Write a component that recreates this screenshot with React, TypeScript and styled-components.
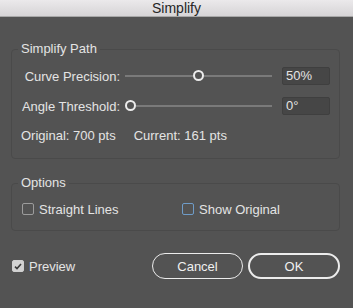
import React from "react";
import styled, { createGlobalStyle } from "styled-components";

const GlobalStyle = createGlobalStyle`
  html, body {
    margin: 0;
    padding: 0;
    background: #535353;
  }
  body {
    font-family: "Liberation Sans", Arial, sans-serif;
    font-size: 13px;
    color: #e4e4e4;
  }
`;

const TRACK_WIDTH = 147;
const THUMB_SIZE = 11;

const Simplify = () => {
  return (
    <>
      <GlobalStyle />
      <Window>
        <TitleBar>Simplify</TitleBar>
        <Body>
          <Group>
            <Legend>Simplify Path</Legend>
            <Rows>
              <Row>
                <Label>Curve Precision:</Label>
                <Slider value={0.5} />
                <ValueBox>50%</ValueBox>
              </Row>
              <Row>
                <Label>Angle Threshold:</Label>
                <Slider value={0} />
                <ValueBox>0°</ValueBox>
              </Row>
              <Info>
                <span>Original: 700 pts</span>
                <span>Current: 161 pts</span>
              </Info>
            </Rows>
          </Group>

          <OptionsGroup>
            <Legend>Options</Legend>
            <CheckGrid>
              <Check label="Straight Lines" />
              <Check label="Show Original" focused />
            </CheckGrid>
          </OptionsGroup>

          <Footer>
            <Check label="Preview" checked />
            <ButtonBar>
              <PillButton>Cancel</PillButton>
              <PillButton $primary>OK</PillButton>
            </ButtonBar>
          </Footer>
        </Body>
      </Window>
    </>
  );
};

const Slider = ({ value }: { value: number }) => (
  <Track>
    <Thumb style={{ left: Math.round(value * (TRACK_WIDTH - THUMB_SIZE)) }} />
  </Track>
);

const Check = ({
  label,
  checked,
  focused,
}: {
  label: string;
  checked?: boolean;
  focused?: boolean;
}) => (
  <CheckLabel>
    <Box $checked={checked} $focused={focused}>
      {checked && (
        <svg width="8" height="7" viewBox="0 0 8 7">
          <polyline points="1,3.6 3,5.6 7,1" fill="none" stroke="#3a3a3a" strokeWidth="1.6" />
        </svg>
      )}
    </Box>
    {label}
  </CheckLabel>
);

export default Simplify;

const Window = styled.div`
  width: 353px;
  height: 308px;
  background: #535353;
  display: flex;
  flex-direction: column;
`;

const TitleBar = styled.div`
  height: 16px;
  line-height: 16px;
  flex: 0 0 auto;
  text-align: center;
  font-size: 14px;
  color: #262626;
  background: linear-gradient(#ebe9eb, #d6d4d6);
  border-bottom: 1px solid #a8a8a8;
`;

const Body = styled.div`
  display: flex;
  flex-direction: column;
  padding: 24px 13px 0 11px;
`;

const Group = styled.fieldset`
  margin: 0;
  padding: 10px 9px 13px 6px;
  border: 1px solid #4a4a4a;
  border-radius: 4px;
  min-width: 0;
`;

const OptionsGroup = styled(Group)`
  margin-top: 16px;
  padding-top: 9px;
  padding-bottom: 12px;
`;

const Legend = styled.legend`
  padding: 0 3px;
  line-height: 16px;
  font-size: 13px;
  color: #e4e4e4;
`;

const Rows = styled.div`
  display: flex;
  flex-direction: column;
  gap: 12px;
  padding-left: 3px;
`;

const Row = styled.div`
  display: flex;
  align-items: center;
  height: 18px;
`;

const Label = styled.div`
  width: 99px;
  margin-right: 5px;
  text-align: right;
  white-space: nowrap;
`;

const Track = styled.div`
  position: relative;
  width: ${TRACK_WIDTH}px;
  height: 2px;
  background: #7a7a7a;
  margin-right: 10px;
`;

const Thumb = styled.div`
  position: absolute;
  top: -5.5px;
  width: ${THUMB_SIZE}px;
  height: ${THUMB_SIZE}px;
  box-sizing: border-box;
  border-radius: 50%;
  border: 2px solid #ececec;
  background: #535353;
`;

const ValueBox = styled.div`
  width: 48px;
  height: 18px;
  box-sizing: border-box;
  padding-left: 3px;
  line-height: 16px;
  background: #464646;
  border: 1px solid #3f3f3f;
  border-radius: 2px;
`;

const Info = styled.div`
  display: flex;
  gap: 18px;
  height: 18px;
  line-height: 18px;
`;

const CheckGrid = styled.div`
  display: grid;
  grid-template-columns: 160px 1fr;
  height: 18px;
  align-items: center;
  padding-left: 4px;
`;

const CheckLabel = styled.label`
  display: flex;
  align-items: center;
  gap: 5px;
  white-space: nowrap;
`;

const Box = styled.span<{ $checked?: boolean; $focused?: boolean }>`
  width: 12px;
  height: 12px;
  box-sizing: border-box;
  border-radius: 2px;
  display: flex;
  align-items: center;
  justify-content: center;
  border: 1px solid ${({ $focused, $checked }) => ($focused ? "#6f9cc8" : $checked ? "#cfcfcf" : "#9c9c9c")};
  background: ${({ $checked }) => ($checked ? "#d2d2d2" : "transparent")};
`;

const Footer = styled.div`
  display: flex;
  align-items: center;
  justify-content: space-between;
  margin-top: 22px;
  padding-left: 1px;
`;

const ButtonBar = styled.div`
  display: flex;
  gap: 5px;
`;

const PillButton = styled.button<{ $primary?: boolean }>`
  height: 26px;
  width: ${({ $primary }) => ($primary ? 92 : 91)}px;
  box-sizing: border-box;
  border-radius: 13px;
  border: ${({ $primary }) => ($primary ? "2px" : "1.5px")} solid #ececec;
  background: transparent;
  color: #f0f0f0;
  font-family: inherit;
  font-size: 13px;
  padding: 0;
  cursor: pointer;
`;
